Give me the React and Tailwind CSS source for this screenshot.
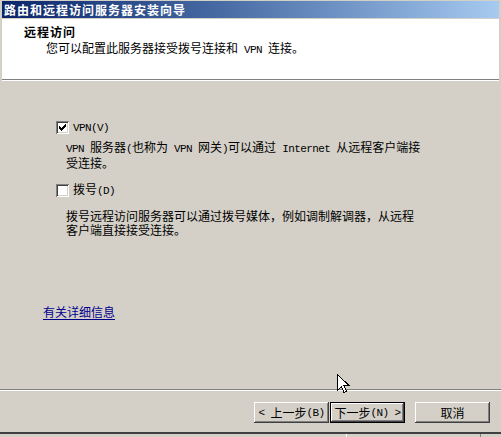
const M = ({ children }) => (
  <span className="font-['Liberation_Mono',monospace] text-[11px] tracking-[-0.6px] whitespace-pre">{children}</span>
);

function CheckBox({ checked }) {
  return (
    <span className="w-[13px] h-[13px] bg-white flex items-center justify-center shadow-[inset_1px_1px_#808080,inset_-1px_-1px_#ffffff,inset_2px_2px_#404040,inset_-2px_-2px_#d4d0c8]">
      {checked && (
        <svg width="7" height="7" viewBox="0 0 7 7" shapeRendering="crispEdges">
          <rect x="0" y="2" width="1" height="3" fill="#000" />
          <rect x="1" y="3" width="1" height="3" fill="#000" />
          <rect x="2" y="4" width="1" height="3" fill="#000" />
          <rect x="3" y="3" width="1" height="3" fill="#000" />
          <rect x="4" y="2" width="1" height="3" fill="#000" />
          <rect x="5" y="1" width="1" height="3" fill="#000" />
          <rect x="6" y="0" width="1" height="3" fill="#000" />
        </svg>
      )}
    </span>
  );
}

function Button({ children, isDefault }) {
  return (
    <button
      className={
        "w-[75px] h-[21px] flex items-center justify-center bg-[#d4d0c8] text-[12px] leading-[12px] " +
        (isDefault
          ? "border border-black shadow-[inset_-1px_-1px_#404040,inset_1px_1px_#ffffff,inset_-2px_-2px_#808080]"
          : "shadow-[inset_-1px_-1px_#404040,inset_1px_1px_#ffffff,inset_-2px_-2px_#808080,inset_2px_2px_#d4d0c8]")
      }
    >
      {children}
    </button>
  );
}

export default function App() {
  return (
    <div className="w-[501px] h-[437px] bg-[#d4d0c8] relative overflow-hidden text-black text-[12px] leading-[12px] font-['Noto_Sans_CJK_SC',sans-serif]">
      <div className="flex flex-col pt-[1px] border-b-2 border-b-[#404040]">
        {/* title bar */}
        <div className="mx-[2px] h-[17px] bg-gradient-to-r from-[#0a246a] to-[#a6caf0] flex items-center pl-[2px]">
          <span className="text-white font-bold tracking-[1px]">路由和远程访问服务器安装向导</span>
        </div>

        {/* header */}
        <div className="mx-[2px] mt-[1px] h-[61px] bg-white border-b border-b-[#808080] shadow-[0_1px_0_#ffffff] flex flex-col">
          <div className="pl-[22px] pt-[7px] font-bold tracking-[1px]">远程访问</div>
          <div className="pl-[44px] mt-[4px] whitespace-nowrap">
            您可以配置此服务器接受拨号连接和<M> VPN </M>连接。
          </div>
        </div>

        {/* body */}
        <div className="h-[308px] mt-[1px] flex flex-col">
          <div className="mt-[40px] pl-[56px] flex items-center gap-[4px]">
            <CheckBox checked />
            <M>VPN(V)</M>
          </div>
          <div className="mt-[6px] pl-[66px] whitespace-nowrap leading-[13px]">
            <M>VPN </M>服务器<M>(</M>也称为<M> VPN </M>网关<M>)</M>可以通过<M> Internet </M>从远程客户端接
            <br />
            受连接。
          </div>

          <div className="mt-[14px] pl-[56px] flex items-center gap-[4px]">
            <CheckBox />
            <span>
              拨号<M>(D)</M>
            </span>
          </div>
          <div className="mt-[12px] pl-[66px] whitespace-nowrap leading-[14px]">
            拨号远程访问服务器可以通过拨号媒体，例如调制解调器，从远程
            <br />
            客户端直接接受连接。
          </div>

          <div className="mt-[69px] pl-[43px]">
            <a href="#" className="text-[#00008b] underline underline-offset-2">有关详细信息</a>
          </div>
        </div>

        {/* separator */}
        <div className="h-[1px] bg-[#808080]" />
        <div className="h-[1px] bg-white" />

        {/* buttons */}
        <div className="h-[41px] pt-[11px] pl-[254px] flex items-start">
          <Button>
            <M>{"< "}</M>上一步<M>(B)</M>
          </Button>
          <div className="ml-[1px]">
            <Button isDefault>
              下一步<M>(N) {">"}</M>
            </Button>
          </div>
          <div className="ml-[10px]">
            <Button>取消</Button>
          </div>
        </div>
      </div>

      {/* strip below window */}
      <div className="h-[3px] flex">
        <div className="w-[346px]" />
        <div className="w-[1px] bg-white" />
        <div className="w-[133px]" />
        <div className="w-[1px] bg-[#808080]" />
      </div>

      {/* mouse pointer */}
      <svg className="absolute left-[337px] top-[374px]" width="13" height="20" viewBox="0 0 13 20" shapeRendering="crispEdges">
        <path d="M0.5 0.5 V16.5 L4.5 12.5 L7 18.5 L9.5 17.5 L7 11.5 H12 Z" fill="#fff" stroke="#000" strokeWidth="1" />
      </svg>
    </div>
  );
}
